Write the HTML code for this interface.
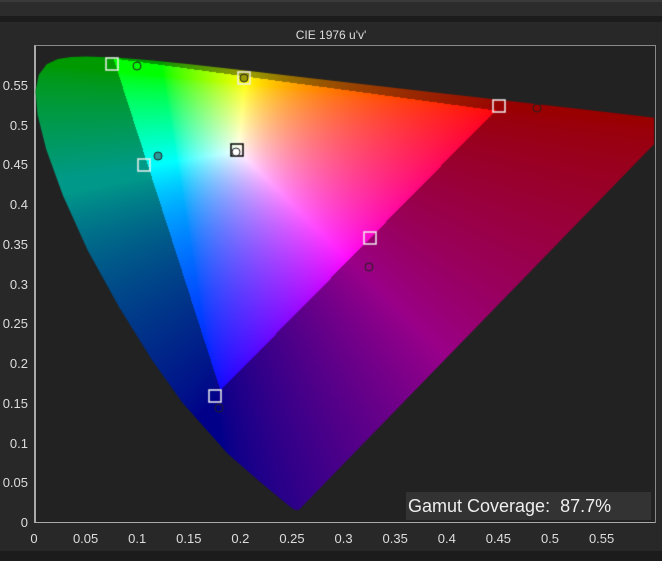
<!DOCTYPE html>
<html><head><meta charset="utf-8">
<style>
html,body{margin:0;padding:0;background:#1c1c1c;width:662px;height:561px;overflow:hidden;font-family:"Liberation Sans",sans-serif}
#top{position:absolute;left:0;top:0;width:662px;height:2px;background:#3a3a3a}
#bar{position:absolute;left:0;top:2px;width:662px;height:14px;background:#2c2c2c}
#panel{position:absolute;left:0;top:22px;width:662px;height:529px;background:#282828}
#title{position:absolute;left:0;width:662px;top:28px;text-align:center;color:#ddd;font-size:12px}
#frame{position:absolute;left:34px;top:45px;width:619px;height:477px;border:1px solid #8a8a8a;border-bottom:none;border-left:2px solid #aaa;background:#222}
#axisb{position:absolute;left:34px;top:522px;width:621px;height:1px;background:#aaa}
canvas{position:absolute;left:0;top:0}
.yl{position:absolute;right:634px;color:#ddd;font-size:13px;text-align:right;white-space:nowrap}
.xl{position:absolute;top:531px;color:#ddd;font-size:13px;width:40px;text-align:center;margin-left:-20px}
#gc{position:absolute;left:406px;top:492px;width:245px;height:28px;background:#333;color:#eee;font-size:18px;line-height:28px;padding-left:2px;box-sizing:border-box}
</style></head><body>
<div id="top"></div><div id="bar"></div>
<div id="panel"></div>
<div id="title">CIE 1976 u'v'</div>
<div id="frame"></div>
<canvas id="c" width="662" height="561"></canvas>
<div id="axisb"></div>
<div id="gc">Gamut Coverage:&nbsp; 87.7%</div>
<div id="labels"></div>
<script>
var L=document.getElementById('labels'),h='';
for(var i=0;i<=11;i++){var v=i*0.05;var y=523-v*795;var t=i==0?'0':(Math.round(v*100)/100).toString();
h+='<div class="yl" style="top:'+(y-8)+'px">'+t+'</div>';
h+='<div class="xl" style="left:'+(34+v*1032)+'px">'+t+'</div>';}
L.innerHTML=h;
var c=document.getElementById('c').getContext('2d');
var xy=[[.1741,.005],[.1733,.0048],[.1714,.0051],[.1689,.0069],[.1644,.0109],[.1566,.0177],[.144,.0297],[.1241,.0578],[.1096,.0868],[.0913,.1327],[.0687,.2007],[.0454,.295],[.0235,.4127],[.0082,.5384],[.0039,.6548],[.0139,.7502],[.0389,.812],[.0743,.8338],[.1142,.8262],[.1547,.8059],[.2296,.7543],[.3016,.6923],[.3731,.6245],[.4441,.5547],[.5125,.4866],[.5752,.4242],[.627,.3725],[.6915,.3083],[.719,.2809],[.7347,.2653]];
var P=xy.map(function(p){var d=-2*p[0]+12*p[1]+3;return [34+4*p[0]/d*1032,523-9*p[1]/d*795];});
c.save();c.beginPath();c.rect(35,46,619,476);c.clip();
c.beginPath();c.moveTo(P[0][0],P[0][1]);for(var i=1;i<P.length;i++)c.lineTo(P[i][0],P[i][1]);c.closePath();
c.fillStyle='#fff';c.fill();
var img=c.getImageData(0,0,662,561),d=img.data;
var G=[113,58],R=[495,110],B=[220,390];
function side(p,a,b){return (b[0]-a[0])*(p[1]-a[1])-(b[1]-a[1])*(p[0]-a[0]);}
function g(v){v=Math.max(0,v);return Math.pow(v,1/1.5);}
for(var py=46;py<523;py++)for(var px=35;px<654;px++){var k=(py*662+px)*4;if(d[k]<200||d[k+1]<200)continue;
var u=(px-34)/1032,v=(523-py)/795;var dn=6*u-16*v+12;var x=9*u/dn,y=4*v/dn;
var X=x/y,Y=1,Z=(1-x-y)/y;
var r=3.2406*X-1.5372*Y-0.4986*Z,gg=-0.9689*X+1.8758*Y+0.0415*Z,b=0.0557*X-0.204*Y+1.057*Z;
r=Math.max(0,r);gg=Math.max(0,gg);b=Math.max(0,b);var m=Math.max(r,gg,b);r/=m;gg/=m;b/=m;
var p=[px,py];var s1=side(p,G,R),s2=side(p,R,B),s3=side(p,B,G);
var inside=(s1>=0&&s2>=0&&s3>=0)||(s1<=0&&s2<=0&&s3<=0);
var f=inside?1:0.6;
if(!inside){gg=Math.min(1,gg*1.15);b*=0.85;}
d[k]=g(r)*255*f;d[k+1]=g(gg)*255*f;d[k+2]=g(b)*255*f;}
c.putImageData(img,0,0);c.restore();
function sq(x,y,col){c.strokeStyle=col;c.lineWidth=1.5;c.strokeRect(x-6,y-6,12,12);}
function ci(x,y,fill){c.beginPath();c.arc(x,y,4,0,7);if(fill){c.fillStyle=fill;c.fill();}c.strokeStyle='#222';c.lineWidth=1;c.stroke();}
[[112,64],[244,78],[499,106],[215,396],[144,165],[370,238]].forEach(function(q){sq(q[0],q[1],'#eee');});
sq(237,150,'#000');
ci(137,66);ci(244,78,'#9a9a00');ci(537,108);ci(219,408);ci(158,156,'#2a9a9a');ci(369,267);ci(236,152,'#fff');
</script>
</body></html>
